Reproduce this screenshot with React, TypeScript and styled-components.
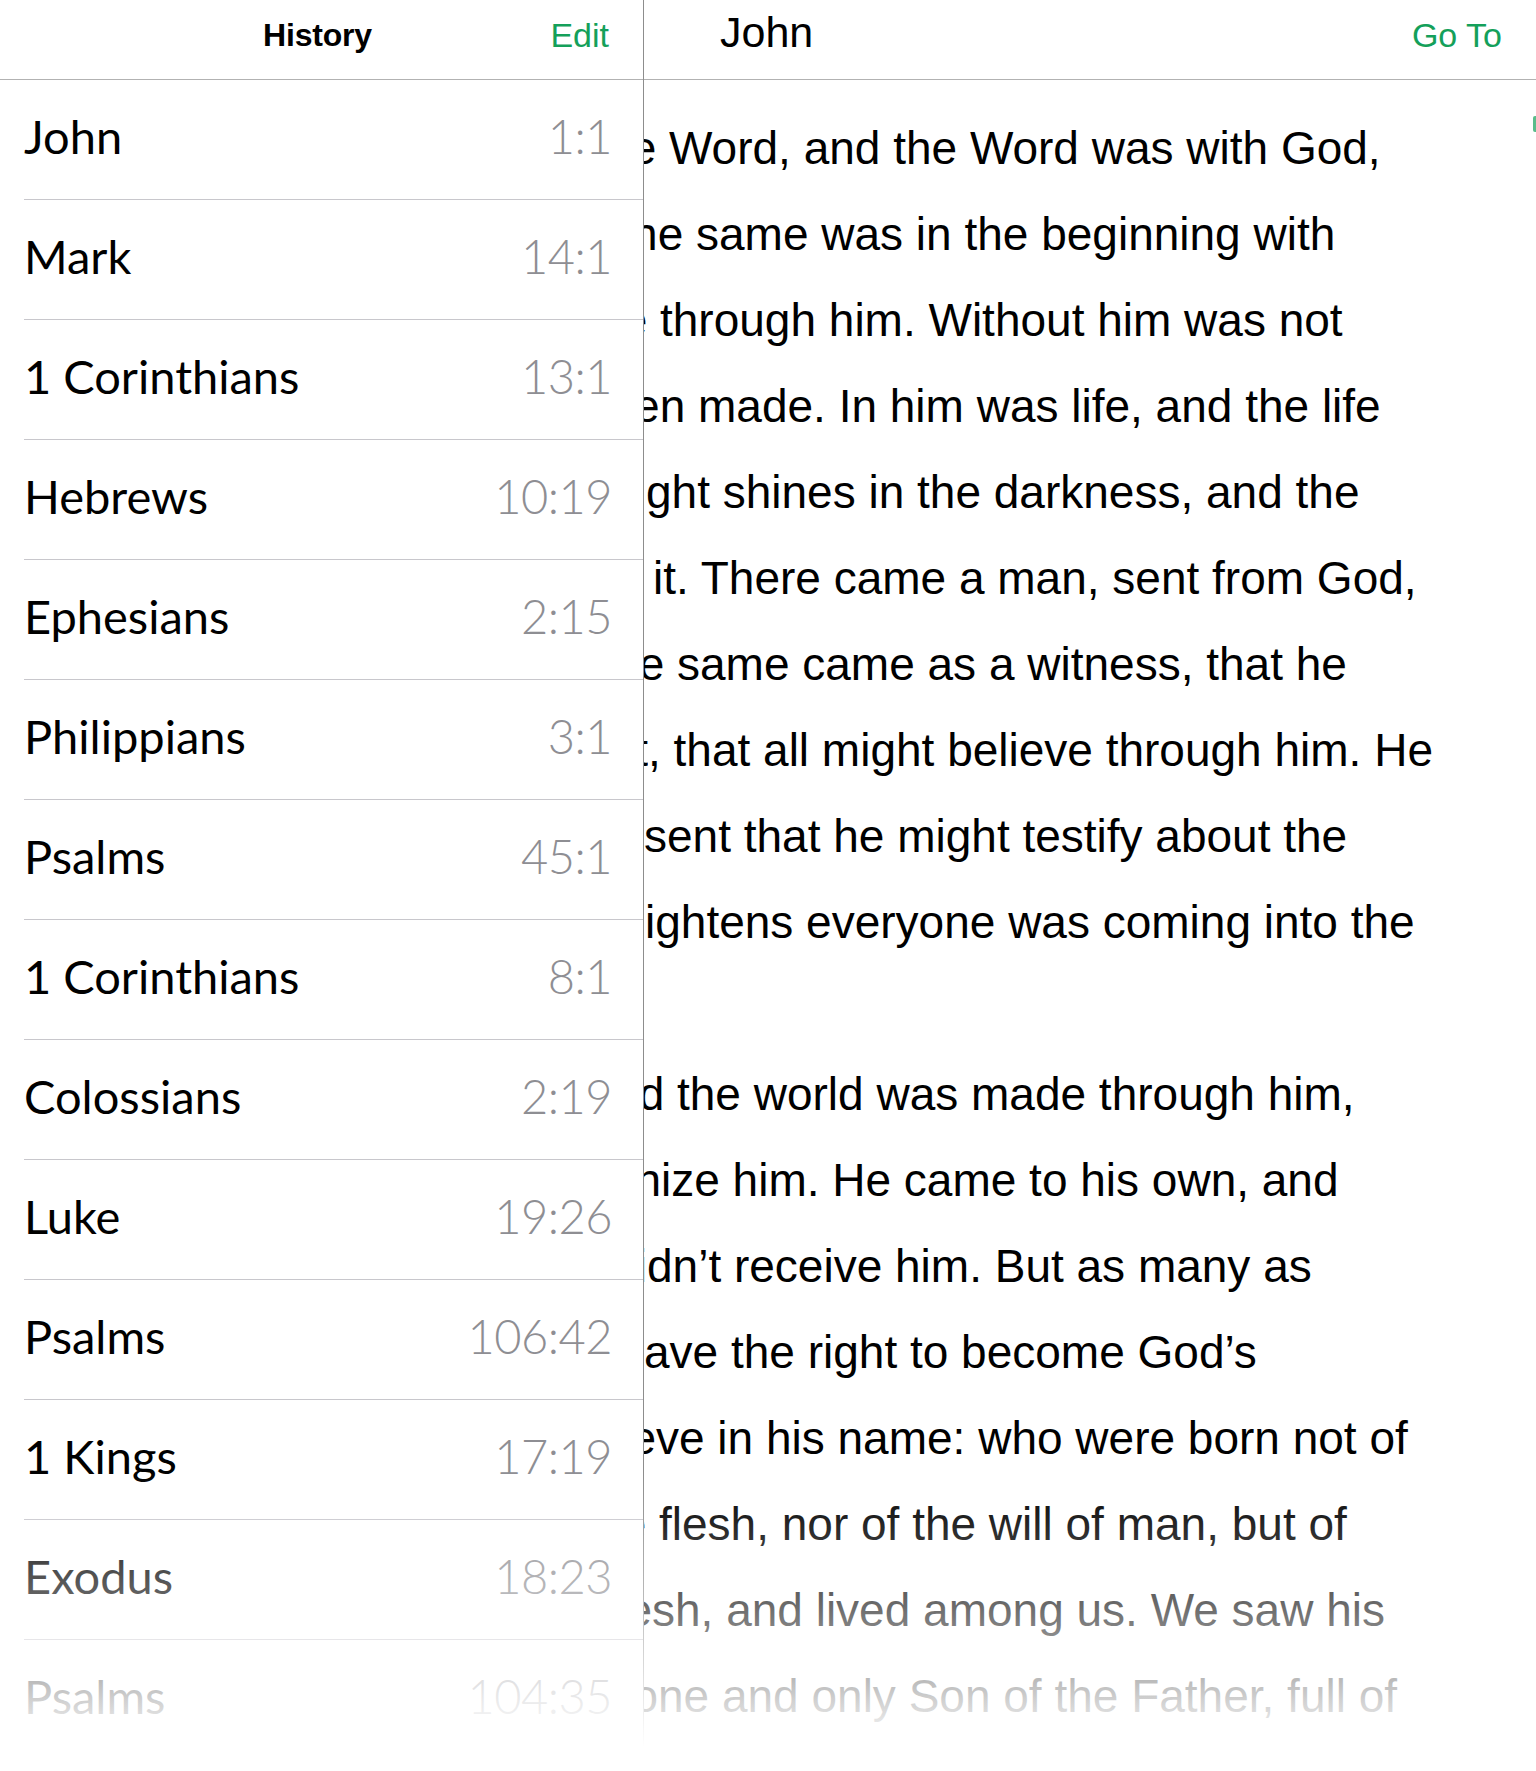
import React from 'react';
import styled, { createGlobalStyle } from 'styled-components';

const GREEN = '#14a05a';

const GlobalStyle = createGlobalStyle`
  html, body {
    margin: 0;
    padding: 0;
    background: #ffffff;
  }
  * {
    box-sizing: border-box;
  }
`;

interface HistoryItem {
  book: string;
  ref: string;
}

const HISTORY: HistoryItem[] = [
  { book: 'John', ref: '1:1' },
  { book: 'Mark', ref: '14:1' },
  { book: '1 Corinthians', ref: '13:1' },
  { book: 'Hebrews', ref: '10:19' },
  { book: 'Ephesians', ref: '2:15' },
  { book: 'Philippians', ref: '3:1' },
  { book: 'Psalms', ref: '45:1' },
  { book: '1 Corinthians', ref: '8:1' },
  { book: 'Colossians', ref: '2:19' },
  { book: 'Luke', ref: '19:26' },
  { book: 'Psalms', ref: '106:42' },
  { book: '1 Kings', ref: '17:19' },
  { book: 'Exodus', ref: '18:23' },
  { book: 'Psalms', ref: '104:35' },
  { book: 'Genesis', ref: '1:1' },
];

// each line of the chapter: the part hidden under the history panel,
// and the part that shows, starting `lead` px right of the panel edge
interface ReaderLine {
  lead: number;
  hidden: string;
  shown: string;
}

const LINES: ReaderLine[] = [
  { lead: 25, hidden: 'In the beginning was the ', shown: 'Word, and the Word was with God,' },
  { lead: 52, hidden: 'and the Word was God. The ', shown: 'same was in the beginning with' },
  { lead: 16, hidden: 'God. All things were made ', shown: 'through him. Without him was not' },
  { lead: 54, hidden: 'anything made that has been ', shown: 'made. In him was life, and the life' },
  { lead: 2, hidden: 'was the light of men. The li', shown: 'ght shines in the darkness, and the' },
  { lead: 9, hidden: 'darkness hasn\u2019t overcome ', shown: 'it. There came a man, sent from God,' },
  { lead: 33, hidden: 'whose name was John. The ', shown: 'same came as a witness, that he' },
  { lead: 4, hidden: 'might testify about the light', shown: ', that all might believe through him. He' },
  { lead: 0, hidden: 'was not the light, but was ', shown: 'sent that he might testify about the' },
  { lead: 1, hidden: 'light. The true light that enl', shown: 'ightens everyone was coming into the' },
  { lead: 0, hidden: 'world.', shown: '' },
  { lead: 33, hidden: 'He was in the world, and ', shown: 'the world was made through him,' },
  { lead: 17, hidden: 'and the world didn\u2019t recogn', shown: 'ize him. He came to his own, and' },
  { lead: 3, hidden: 'those who were his own di', shown: 'dn\u2019t receive him. But as many as' },
  { lead: 0, hidden: 'received him, to them he g', shown: 'ave the right to become God\u2019s' },
  { lead: 12, hidden: 'children, to those who belie', shown: 've in his name: who were born not of' },
  { lead: 15, hidden: 'blood, nor of the will of the ', shown: 'flesh, nor of the will of man, but of' },
  { lead: 8, hidden: 'God. The Word became fle', shown: 'sh, and lived among us. We saw his' },
  { lead: 14, hidden: 'glory, such glory as of the o', shown: 'ne and only Son of the Father, full of' },
  { lead: 0, hidden: 'grace and truth.', shown: '' },
];

const App: React.FC = () => {
  return (
    <>
      <GlobalStyle />
      <Page>
        <Sidebar>
          <SidebarHeader>
            <HeaderTitle>History</HeaderTitle>
            <HeaderAction>Edit</HeaderAction>
          </SidebarHeader>
          <HistoryList>
            {HISTORY.map((item, i) => (
              <HistoryRow key={i}>
                <BookName>{item.book}</BookName>
                <Reference>{item.ref}</Reference>
              </HistoryRow>
            ))}
          </HistoryList>
        </Sidebar>

        <Reader>
          <ReaderHeader>
            <ReaderTitle>John</ReaderTitle>
            <HeaderAction>Go To</HeaderAction>
          </ReaderHeader>
          <ReaderBody>
            {LINES.map((line, i) => (
              <TextLine key={i}>
                <HiddenPart $lead={line.lead}>
                  <span>{line.hidden}</span>
                </HiddenPart>
                <ShownPart>{line.shown}</ShownPart>
              </TextLine>
            ))}
          </ReaderBody>
        </Reader>

        <ScrollThumb />
        <BottomFade />
      </Page>
    </>
  );
};

const Page = styled.div`
  position: relative;
  display: flex;
  width: 1536px;
  height: 1771px;
  overflow: hidden;
  background: #fff;
`;

const Sidebar = styled.aside`
  width: 644px;
  flex-shrink: 0;
  border-right: 1px solid #8d8d8d;
  background: #fff;
  display: flex;
  flex-direction: column;
`;

const SidebarHeader = styled.div`
  position: relative;
  height: 80px;
  flex-shrink: 0;
  display: flex;
  align-items: center;
  justify-content: center;
  border-bottom: 1px solid #b2b2b2;
  padding-bottom: 9px;
`;

const HeaderTitle = styled.h1`
  margin: 0;
  font-family: "Liberation Sans", Arial, sans-serif;
  font-weight: 700;
  font-size: 32px;
  color: #000;
  letter-spacing: -0.2px;
  margin-right: 8px;
`;

const HeaderAction = styled.span`
  font-family: "Liberation Sans", Arial, sans-serif;
  font-size: 34px;
  color: ${GREEN};
  ${SidebarHeader} & {
    position: absolute;
    right: 34px;
    top: 16px;
  }
`;

const HistoryList = styled.ul`
  list-style: none;
  margin: 0;
  padding: 0;
`;

const HistoryRow = styled.li`
  height: 120px;
  margin-left: 24px;
  padding-right: 31px;
  border-bottom: 1px solid #c8c7cc;
  display: flex;
  align-items: center;
  justify-content: space-between;
  font-family: Lato, "Open Sans", sans-serif;
  font-size: 47px;
  padding-bottom: 8px;
`;

const BookName = styled.span`
  color: #000;
  font-weight: 400;
`;

const Reference = styled.span`
  color: #8e8e93;
  font-weight: 300;
  letter-spacing: -0.5px;
`;

const Reader = styled.main`
  flex: 1;
  min-width: 0;
  overflow: hidden;
  display: flex;
  flex-direction: column;
`;

const ReaderHeader = styled.div`
  height: 80px;
  flex-shrink: 0;
  display: flex;
  align-items: center;
  justify-content: space-between;
  padding: 0 34px 9px 76px;
  border-bottom: 1px solid #b2b2b2;
`;

const ReaderTitle = styled.h2`
  margin: 0;
  font-family: "Liberation Sans", Arial, sans-serif;
  font-weight: 400;
  font-size: 43px;
  color: #000;
  margin-top: -6px;
`;

const ReaderBody = styled.div`
  padding-top: 25px;
  font-family: "Liberation Sans", Arial, sans-serif;
  font-size: 46px;
  color: #000;
`;

const TextLine = styled.div`
  height: 86px;
  display: flex;
  align-items: center;
  white-space: pre;
`;

const HiddenPart = styled.div<{ $lead: number }>`
  width: ${p => p.$lead}px;
  flex-shrink: 0;
  display: flex;
  justify-content: flex-end;
  overflow: hidden;
`;

const ShownPart = styled.span``;

const ScrollThumb = styled.div`
  position: absolute;
  top: 116px;
  right: 0;
  width: 3px;
  height: 16px;
  border-radius: 2px 0 0 2px;
  background: ${GREEN};
  opacity: 0.7;
`;

const BottomFade = styled.div`
  position: absolute;
  left: 0;
  right: 0;
  bottom: 0;
  height: 300px;
  pointer-events: none;
  background: linear-gradient(
    180deg,
    rgba(255, 255, 255, 0) 0%,
    rgba(255, 255, 255, 0.12) 15%,
    rgba(255, 255, 255, 0.42) 45%,
    rgba(255, 255, 255, 0.8) 75%,
    #fff 92%
  );
`;

export default App;
